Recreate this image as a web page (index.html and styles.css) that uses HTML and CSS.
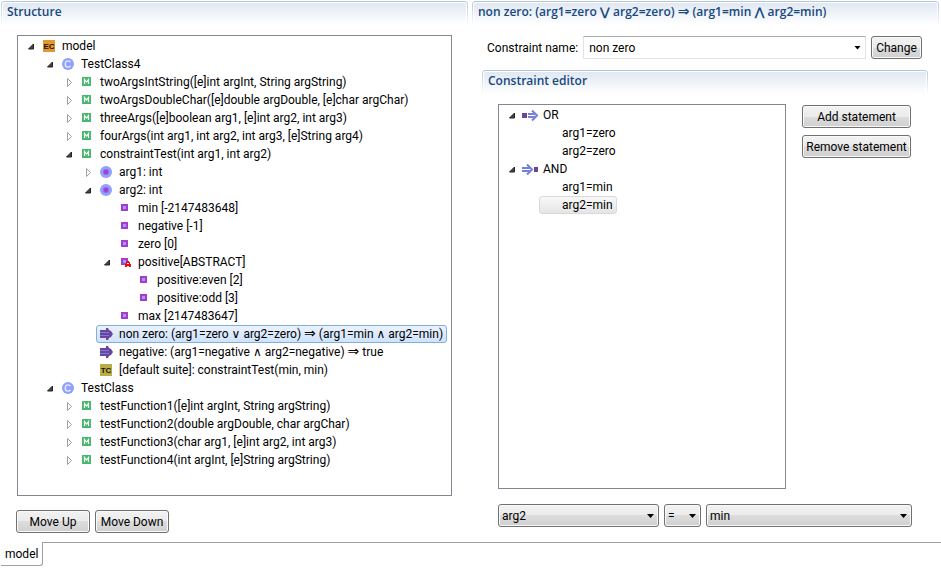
FILE: index.html
```html
<!DOCTYPE html>
<html lang="en">
<head>
<meta charset="utf-8">
<title>Model editor</title>
<link rel="stylesheet" href="styles.css">
</head>
<body>
<svg class="sprite" aria-hidden="true">
  <symbol id="open" viewBox="0 0 16 16"><path d="M10.5 7v5h-5z" fill="#444" stroke="#222"/></symbol>
  <symbol id="closed" viewBox="0 0 16 16"><path d="M6.5 5.5v8l4-4z" fill="#fff" stroke="#a0a0a0"/></symbol>
  <symbol id="ec" viewBox="0 0 16 16"><rect x="2" y="2" width="12" height="12" fill="#e29733"/><text x="8" y="11" text-anchor="middle" class="glyph glyph-dark">EC</text></symbol>
  <symbol id="class" viewBox="0 0 16 16"><circle cx="8" cy="8" r="6" fill="#8fa0ff"/><path d="M10.5 6.2Q9.500 4.800 8 4.800C4.300 4.800 4.300 11.200 8 11.200Q9.500 11.200 10.500 9.800" fill="none" stroke="#eef" stroke-width="1.300"/></symbol>
  <symbol id="method" viewBox="0 0 16 16"><rect x="3" y="3" width="9" height="9" fill="#46b96c"/><path d="M5.500 10V5.500L7.500 8L9.500 5.500V10" fill="none" stroke="#fff" stroke-width="1.200"/></symbol>
  <symbol id="param" viewBox="0 0 16 16"><circle cx="8" cy="8" r="6" fill="#8fa0ff"/><circle cx="8" cy="8" r="3" fill="#9666e2"/><circle cx="8" cy="8" r="2" fill="#a93ace"/></symbol>
  <symbol id="choice" viewBox="0 0 16 16"><path d="M4 4h7v7H4z" fill="#a93ace"/><path d="M6 6h3v3H6z" fill="#8fa0ff"/></symbol>
  <symbol id="abstract" viewBox="0 0 16 16"><path d="M4 4h7v7H4z" fill="#a93ace"/><path d="M6 6h3v3H6z" fill="#8fa0ff"/><path d="M8 13h2v-1h2v1h2v-3h-1V8h-1V7h-2v1H9v2H8z" fill="#f00512"/><path d="M10 9h2v1h-2z" fill="#fff"/></symbol>
  <symbol id="rule" viewBox="0 0 16 16"><path d="M2 4h6V2h2l1 2 2 1 2 3-2 3-2 1-1 2H8v-2H2z" fill="#6b459d"/><path d="M2 6h9v1H2zM2 9h9v1H2z" fill="#757de0"/></symbol>
  <symbol id="tc" viewBox="0 0 16 16"><rect x="2" y="2" width="12" height="12" fill="#b9ad49"/><text x="8" y="11" text-anchor="middle" class="glyph glyph-dark">TC</text></symbol>
  <symbol id="or" viewBox="0 0 16 16"><path d="M0 6h5v5H0z" fill="#6b459d"/><path d="M6 7h7M6 10h7M10 3.500l5 5-5 5" fill="none" stroke="#7680da" stroke-width="2"/></symbol>
  <symbol id="and" viewBox="0 0 16 16"><path d="M12 6h4v5h-4z" fill="#6b459d"/><path d="M0 7h8M0 10h8M5 3.500l5 5-5 5" fill="none" stroke="#7680da" stroke-width="2"/></symbol>
</svg>

<main class="workspace">
  <section class="panel">
    <h2 class="title">Structure</h2>
    <div class="structure">
      <ul class="tree structure-tree">
        <li><div class="row"><svg class="twist"><use href="#open"/></svg><span class="item"><svg class="icon"><use href="#ec"/></svg>model</span></div>
          <ul>
            <li><div class="row"><svg class="twist"><use href="#open"/></svg><span class="item"><svg class="icon"><use href="#class"/></svg>TestClass4</span></div>
              <ul>
                <li><div class="row"><svg class="twist"><use href="#closed"/></svg><span class="item"><svg class="icon"><use href="#method"/></svg>twoArgsIntString([e]int argInt, String argString)</span></div></li>
                <li><div class="row"><svg class="twist"><use href="#closed"/></svg><span class="item"><svg class="icon"><use href="#method"/></svg>twoArgsDoubleChar([e]double argDouble, [e]char argChar)</span></div></li>
                <li><div class="row"><svg class="twist"><use href="#closed"/></svg><span class="item"><svg class="icon"><use href="#method"/></svg>threeArgs([e]boolean arg1, [e]int arg2, int arg3)</span></div></li>
                <li><div class="row"><svg class="twist"><use href="#closed"/></svg><span class="item"><svg class="icon"><use href="#method"/></svg>fourArgs(int arg1, int arg2, int arg3, [e]String arg4)</span></div></li>
                <li><div class="row"><svg class="twist"><use href="#open"/></svg><span class="item"><svg class="icon"><use href="#method"/></svg>constraintTest(int arg1, int arg2)</span></div>
                  <ul>
                    <li><div class="row"><svg class="twist"><use href="#closed"/></svg><span class="item"><svg class="icon"><use href="#param"/></svg>arg1: int</span></div></li>
                    <li><div class="row"><svg class="twist"><use href="#open"/></svg><span class="item"><svg class="icon"><use href="#param"/></svg>arg2: int</span></div>
                      <ul>
                        <li><div class="row"><svg class="twist"></svg><span class="item"><svg class="icon"><use href="#choice"/></svg>min [-2147483648]</span></div></li>
                        <li><div class="row"><svg class="twist"></svg><span class="item"><svg class="icon"><use href="#choice"/></svg>negative [-1]</span></div></li>
                        <li><div class="row"><svg class="twist"></svg><span class="item"><svg class="icon"><use href="#choice"/></svg>zero [0]</span></div></li>
                        <li><div class="row"><svg class="twist"><use href="#open"/></svg><span class="item"><svg class="icon"><use href="#abstract"/></svg>positive[ABSTRACT]</span></div>
                          <ul>
                            <li><div class="row"><svg class="twist"></svg><span class="item"><svg class="icon"><use href="#choice"/></svg>positive:even [2]</span></div></li>
                            <li><div class="row"><svg class="twist"></svg><span class="item"><svg class="icon"><use href="#choice"/></svg>positive:odd [3]</span></div></li>
                          </ul>
                        </li>
                        <li><div class="row"><svg class="twist"></svg><span class="item"><svg class="icon"><use href="#choice"/></svg>max [2147483647]</span></div></li>
                      </ul>
                    </li>
                    <li><div class="row"><svg class="twist"></svg><span class="item selected"><svg class="icon"><use href="#rule"/></svg><span>non zero: (arg1=zero ∨ arg2=zero) <span class="implies">⇒</span> (arg1=min ∧ arg2=min)</span></span></div></li>
                    <li><div class="row"><svg class="twist"></svg><span class="item"><svg class="icon"><use href="#rule"/></svg><span>negative: (arg1=negative ∧ arg2=negative) <span class="implies">⇒</span> true</span></span></div></li>
                    <li><div class="row"><svg class="twist"></svg><span class="item"><svg class="icon"><use href="#tc"/></svg>[default suite]: constraintTest(min, min)</span></div></li>
                  </ul>
                </li>
              </ul>
            </li>
            <li><div class="row"><svg class="twist"><use href="#open"/></svg><span class="item"><svg class="icon"><use href="#class"/></svg>TestClass</span></div>
              <ul>
                <li><div class="row"><svg class="twist"><use href="#closed"/></svg><span class="item"><svg class="icon"><use href="#method"/></svg>testFunction1([e]int argInt, String argString)</span></div></li>
                <li><div class="row"><svg class="twist"><use href="#closed"/></svg><span class="item"><svg class="icon"><use href="#method"/></svg>testFunction2(double argDouble, char argChar)</span></div></li>
                <li><div class="row"><svg class="twist"><use href="#closed"/></svg><span class="item"><svg class="icon"><use href="#method"/></svg>testFunction3(char arg1, [e]int arg2, int arg3)</span></div></li>
                <li><div class="row"><svg class="twist"><use href="#closed"/></svg><span class="item"><svg class="icon"><use href="#method"/></svg>testFunction4(int argInt, [e]String argString)</span></div></li>
              </ul>
            </li>
          </ul>
        </li>
      </ul>
      <div class="actions">
        <button class="control move" type="button">Move Up</button>
        <button class="control move" type="button">Move Down</button>
      </div>
    </div>
  </section>

  <section class="panel">
    <h2 class="title">non zero: (arg1=zero ⋁ arg2=zero) <span class="implies">⇒</span> (arg1=min ⋀ arg2=min)</h2>
    <div class="details">
      <form class="name-form">
        <label for="constraint-name">Constraint name:</label>
        <span class="combo">
          <input id="constraint-name" type="text" value="non zero">
          <button class="combo-toggle" type="button" aria-label="Show names"><span class="caret"></span></button>
        </span>
        <button class="control change" type="button">Change</button>
      </form>
      <section class="editor">
        <h3 class="title">Constraint editor</h3>
        <div class="editor-body">
          <div class="editor-main">
            <ul class="tree editor-tree">
              <li><div class="row"><svg class="twist"><use href="#open"/></svg><span class="item"><svg class="icon"><use href="#or"/></svg>OR</span></div>
                <ul>
                  <li><div class="row"><svg class="twist"></svg><span class="item"><svg class="icon"></svg>arg1=zero</span></div></li>
                  <li><div class="row"><svg class="twist"></svg><span class="item"><svg class="icon"></svg>arg2=zero</span></div></li>
                </ul>
              </li>
              <li><div class="row"><svg class="twist"><use href="#open"/></svg><span class="item"><svg class="icon"><use href="#and"/></svg>AND</span></div>
                <ul>
                  <li><div class="row"><svg class="twist"></svg><span class="item"><svg class="icon"></svg>arg1=min</span></div></li>
                  <li><div class="row"><svg class="twist"></svg><span class="item selected inactive"><svg class="icon"></svg>arg2=min</span></div></li>
                </ul>
              </li>
            </ul>
            <div class="statement-actions">
              <button class="control" type="button">Add statement</button>
              <button class="control" type="button">Remove statement</button>
            </div>
          </div>
          <div class="condition">
            <span class="pick pick-arg"><select class="control" aria-label="Argument"><option>arg2</option></select><span class="caret"></span></span>
            <span class="pick pick-op"><select class="control" aria-label="Operator"><option>=</option></select><span class="caret"></span></span>
            <span class="pick pick-value"><select class="control" aria-label="Value"><option>min</option></select><span class="caret"></span></span>
          </div>
        </div>
      </section>
    </div>
  </section>
</main>
<nav class="tabs"><a class="tab" href="#model">model</a><span class="tabs-rest"></span></nav>
</body>
</html>
```
FILE: styles.css
```css
* { box-sizing: border-box; }

body {
  margin: 0;
  min-height: 100vh;
  display: flex;
  flex-direction: column;
  background: #fff;
  color: #000;
  font: 12px/16px Roboto, "DejaVu Sans", sans-serif;
}

.sprite { display: none; }
ul { list-style: none; margin: 0; padding: 0; }

.workspace {
  flex: 1;
  display: grid;
  grid-template-columns: minmax(0, 1fr) minmax(0, 1fr);
  gap: 4px;
  padding: 1px 2px 0 1px;
}

.panel, .structure, .details, .editor, .editor-body {
  display: flex;
  flex-direction: column;
}
.structure, .details, .editor, .editor-body { flex: 1; }

.title {
  margin: 0;
  height: 24px;
  padding: 2px 5px;
  border: 1px solid transparent;
  border-bottom: 0;
  border-radius: 4px 4px 0 0;
  background:
    linear-gradient(#dfe7f1, #fff) padding-box,
    linear-gradient(#b2c4dc, #fff) border-box;
  box-shadow: inset 1px 1px #fff, inset -1px 0 #fff;
  color: #17487f;
  font: 600 12px/16px "Open Sans", "DejaVu Sans", sans-serif;
  white-space: nowrap;
}
.implies { font-size: 14px; line-height: 12px; }

/* Trees */
.tree {
  border: 1px solid #828790;
  padding: 1px;
  padding-left: 0;
  overflow: hidden;
}
.tree ul { padding-left: 19px; }
.row { display: flex; height: 18px; padding-left: 5px; }
.twist { flex: none; width: 16px; height: 16px; }
.item {
  display: flex;
  gap: 5px;
  padding: 0 3px 0 1px;
  border: 1px solid transparent;
  white-space: nowrap;
}
.icon { flex: none; width: 16px; height: 16px; }
.glyph { font: bold 8px "Liberation Sans", sans-serif; }
.glyph-dark { fill: #1c1608; }
.selected {
  border-color: #84acdd;
  border-radius: 3px;
  background: linear-gradient(#e9f2fe, #cfe3fc);
}
.inactive {
  border-color: #d9d9d9;
  background: linear-gradient(#f8f8f8, #e5e5e5);
}

.structure { padding: 10px 16px 9px 15px; }
.structure-tree { flex: 1; margin-left: 1px; }
.actions { display: flex; gap: 5px; margin-top: 14px; }

/* Controls */
.control {
  height: 23px;
  padding: 0 4px;
  border: 1px solid #707070;
  border-radius: 3px;
  background: linear-gradient(#f2f2f2, #ebebeb 50%, #dddddd 50%, #cfcfcf);
  box-shadow: inset 0 0 0 1px #fafafa;
  color: #000;
  font: inherit;
  white-space: nowrap;
}
.move { width: 74px; padding: 0; }
.change { width: 51px; padding: 0; }
.caret {
  display: block;
  width: 7px;
  height: 4px;
  background: #000;
  clip-path: polygon(0 0, 100% 0, 50% 100%);
}

.details { padding: 11px 11px 15px 10px; }
.name-form {
  display: flex;
  align-items: center;
  gap: 5px;
  padding: 0 6px 0 5px;
}
.name-form label { flex: 0 0 91px; white-space: nowrap; }
.combo {
  flex: 1;
  display: flex;
  height: 23px;
  border: 1px solid #e2e3ea;
  border-top-color: #abadb3;
}
.combo input {
  flex: 1;
  min-width: 0;
  padding: 0 5px;
  border: 0;
  outline: 0;
  background: none;
  font: inherit;
}
.combo-toggle {
  padding: 0 4px;
  border: 0;
  background: none;
}
.editor { margin-top: 11px; }
.editor-body { padding: 10px 16px 0; }
.editor-main { flex: 1; display: flex; gap: 16px; }
.editor-tree { flex: 1; }
.statement-actions {
  display: flex;
  flex-direction: column;
  gap: 7px;
  width: 110px;
  padding: 1px 1px 0 0;
}
.statement-actions .control { padding: 0; }

.condition { display: flex; gap: 5px; margin-top: 15px; }
.pick { position: relative; }
.pick select { width: 100%; padding: 0 3px; appearance: none; }
.pick .caret { position: absolute; right: 5px; top: 10px; pointer-events: none; }
.pick-arg { flex: 161; }
.pick-op { flex: 0 0 37px; }
.pick-value { flex: 206; }

/* Page tabs */
.tabs { display: flex; height: 27px; padding-left: 1px; }
.tab {
  min-width: 42px;
  height: 24px;
  padding: 4px;
  border: 1px solid #a0a0a0;
  border-width: 0 1px 1px 0;
  border-radius: 0 0 3px 0;
  color: #000;
  text-decoration: none;
}
.tabs-rest { flex: 1; border-top: 1px solid #a0a0a0; }
```
